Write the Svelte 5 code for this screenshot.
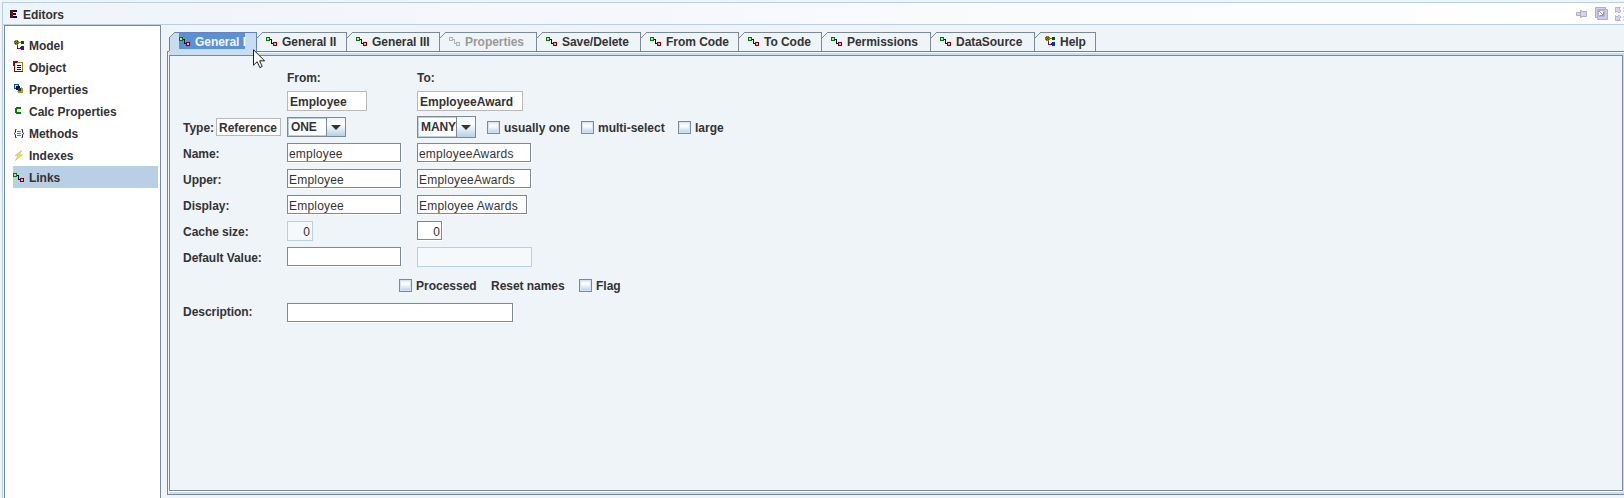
<script>
  const nav = [
    { label: 'Model', icon: 'model' },
    { label: 'Object', icon: 'object' },
    { label: 'Properties', icon: 'props' },
    { label: 'Calc Properties', icon: 'calc' },
    { label: 'Methods', icon: 'methods' },
    { label: 'Indexes', icon: 'indexes' },
    { label: 'Links', icon: 'link' }
  ];
  const tabs = [
    { label: 'General I', width: 88 },
    { label: 'General II', width: 90 },
    { label: 'General III', width: 93 },
    { label: 'Properties', width: 97, disabled: true },
    { label: 'Save/Delete', width: 104 },
    { label: 'From Code', width: 98 },
    { label: 'To Code', width: 83 },
    { label: 'Permissions', width: 109 },
    { label: 'DataSource', width: 104 },
    { label: 'Help', width: 61, icon: 'model' }
  ];
</script>

{#snippet glyph(name, off)}
  <svg class="glyph" width="12" height="12" viewBox="0 0 12 12" shape-rendering="crispEdges">
    {#if name === 'link'}
      <g transform="translate(0 2)" fill="none">
        <rect x="0.5" y="0.5" width="3" height="3" stroke={off ? '#b3b3b3' : '#007800'} fill={off ? '#eee' : '#b8e0b0'} />
        <path d="M4 2.5H5.5V6.5H7" stroke={off ? '#b3b3b3' : '#000070'} />
        <rect x="7.5" y="5.5" width="3" height="3" stroke={off ? '#b3b3b3' : '#800000'} fill={off ? '#eee' : '#e8c0b0'} />
      </g>
    {:else if name === 'model'}
      <g transform="translate(1 1)">
        <path d="M1 0h3v1h1v3h-1v1h-3v-1h-1v-3h1z" fill="#8c8420" />
        <path d="M1 1h1v1h-1zM3 1h1v1h-1zM2 2h1v1h-1zM1 3h1v1h-1zM3 3h1v1h-1z" fill="#4c4a10" />
        <path d="M5 2h2v1h-2z" fill="#808000" />
        <path d="M7 1h3v3h-3z" fill="#00502c" />
        <path d="M3 5h1v3h3v1h-4z" fill="#880088" />
        <path d="M7 6h3v4h-3zM6 7h1v1h-1z" fill="#003a80" />
      </g>
    {:else if name === 'object'}
      <path d="M0 0h5v1h-4v4h-1z" fill="#006000" />
      <path d="M1 1h3v1h-2v8h8v1h-9z" fill="#8b0000" />
      <path d="M4 1h6v9h-1v-8h-5z" fill="#8c8420" />
      <path d="M3 2h6v8h-6z" fill="#fff" />
      <path d="M4 4h4v1h-4zM4 6h4v1h-4zM4 8h4v1h-4z" fill="#000080" />
    {:else if name === 'props'}
      <path d="M1 1h5v5h-5z" fill="#006060" />
      <path d="M2 2h3v3h-3z" fill="#b8dcf0" />
      <path d="M3 3h4v4h-4z" fill="#000080" />
      <path d="M5 5h5v5h-5z" fill="#a09c30" />
      <path d="M5 5h3v3h-3z" fill="#20401c" />
      <path d="M8 4h1v1h-1zM4 8h1v1h-1z" fill="#b0b070" />
    {:else if name === 'calc'}
      <path d="M3 2h5v2h-4v3h4v2h-5v-1h-1v-5h1z" fill="#008000" />
    {:else if name === 'methods'}
      <path d="M3.5 2.500h-1v2.500l-1 1.500 1 1.500v2.500h1M8.500 2.500h1v2.500l1 1.500-1 1.500v2.500h-1" fill="none" stroke="#20208c" shape-rendering="auto" />
      <path d="M4 4h4v1h-4zM4 6h4v1h-4zM4 8h4v1h-4z" fill="#7a8040" />
    {:else if name === 'indexes'}
      <path d="M8.700 1.500L2 6.500h3L2.300 11.500 9.500 5.700H6.200z" fill="#f5ee28" stroke="#b8b480" stroke-width=".6" shape-rendering="auto" />
    {/if}
  </svg>
{/snippet}

{#snippet check(label, w)}
  <span class="check" style="width:{w}px"><i></i><span>{label}</span></span>
{/snippet}

<div class="window">
  <header>
    <svg class="logo" width="8" height="8" viewBox="0 0 8 8" shape-rendering="crispEdges">
      <path d="M0 0h4v8h-4z" fill="#8b0000" /><path d="M0 0h1v8h-1z" fill="#202020" />
      <path d="M3 0h4v2h-4zM3 6h4v2h-4zM3 3h3v2h-3z" fill="#000080" />
      <path d="M3 2h1v1h-1zM3 5h1v1h-1z" fill="#e8d8e0" />
    </svg>
    <span class="title">Editors</span>
    <div class="tools">
      <svg width="12" height="10" viewBox="0 0 12 10"><path d="M.5 3.500h4v3h-4zM4.500 1.500h1v1h5v5h-5v1h-1z" fill="#d6d2f6" stroke="#b0afbc" /></svg>
      <svg width="13" height="13" viewBox="0 0 13 13"><path d="M.5.5h10v10H.5z" fill="#d6d2f6" stroke="#b0afbc" /><path d="M2.500 2.500h10v10h-10z" fill="#cdc9f2" stroke="#b0afbc" /><path d="M3.500 3.500h6v6h-6z" fill="#f7f6ff" stroke="#b6b4c8" /><path d="M4 4l4 4M8.500 4.500v4h-4" fill="none" stroke="#96959f" /></svg>
      <svg width="9" height="14" viewBox="0 0 9 14"><path d="M.5 5.500v-5h5l-1.500 1.500 2 2-2 2-2-2zM.5 8.500v5h5l-1.500-1.500 2-2-2-2-2 2z" fill="#d6d2f6" stroke="#b0afbc" stroke-width=".9" /><path d="M8 1h1M8 4h1M8 10h1M8 13h1" stroke="#b0afbc" /></svg>
    </div>
  </header>

  <div class="body">
    <nav>
      {#each nav as n}
        <div class="item" class:active={n.icon === 'link'}>{@render glyph(n.icon)}<span>{n.label}</span></div>
      {/each}
    </nav>

    <main>
      <div class="tabs">
        {#each tabs as t, i}
          <div class="tab" class:selected={i === 0} class:disabled={t.disabled} style="width:{t.width}px">
            <svg class="corner" width="7" height="7" viewBox="0 0 7 7"><path d="M0 0H6L0 6z" fill="#eff4f9" /><path d="M0 6L6 0" stroke="#7a8a99" /></svg>
            <div class="tab-label">{@render glyph(t.icon ?? 'link', t.disabled)}<span>{t.label}</span></div>
          </div>
        {/each}
        <svg class="cursor" width="13" height="20" viewBox="0 0 13 20"><path d="M.5.800V16.200L4.200 12.700 6.800 18.600 9.200 17.500 6.600 11.800H11.600z" fill="#fff" stroke="#222" /></svg>
      </div>

      <div class="panel">
        <div class="pane">
          <div class="form">
            <span></span><b class="head">From:</b><b class="head">To:</b>
            <span></span><div class="box" style="width:80px">Employee</div><div class="box" style="width:106px">EmployeeAward</div>
            <div class="type"><span>Type:</span><div class="ref">Reference</div></div>
            <div class="combo"><span>ONE</span><i></i></div>
            <div class="many">
              <div class="combo tall"><span>MANY</span><i></i></div>
              {@render check('usually one', 94)}
              {@render check('multi-select', 97)}
              {@render check('large', 60)}
            </div>
            <b>Name:</b><div class="field">employee</div><div class="field">employeeAwards</div>
            <b>Upper:</b><div class="field">Employee</div><div class="field">EmployeeAwards</div>
            <b>Display:</b><div class="field">Employee</div><div class="field" style="width:110px">Employee Awards</div>
            <b>Cache size:</b><div class="field num off" style="width:26px">0</div><div class="field num" style="width:25px">0</div>
            <b>Default Value:</b><div class="field"></div><div class="field off" style="width:115px"></div>
          </div>
          <div class="flags">
            {@render check('Processed', 92)}
            <b>Reset names</b>
            {@render check('Flag', 50)}
          </div>
          <div class="desc"><b>Description:</b><div class="field" style="width:226px"></div></div>
        </div>
      </div>
    </main>
  </div>
</div>

<style>
  :global(body) { background: #eff4f9; overflow: hidden; }
  .window, .window * { box-sizing: border-box; }
  .window {
    height: 498px;
    padding: 2px 0 0 2px;
    display: flex;
    flex-direction: column;
    font: bold 12px/14px "Liberation Sans", Arial, sans-serif;
    color: #333;
    white-space: nowrap;
    overflow: hidden;
  }
  header {
    height: 23px;
    flex: none;
    display: flex;
    align-items: center;
    padding-left: 7px;
    border: 1px solid #b8cfe5;
    border-right: 0;
    background: linear-gradient(90deg, #eff4f9, #fff);
  }
  .logo { margin-top: 1px; }
  .title { margin-left: 5px; padding-top: 2px; letter-spacing: -.05px; }
  .tools { margin-left: auto; display: flex; align-items: center; gap: 7px; }
  .body { flex: 1; display: flex; border-left: 1px solid #b8cfe5; padding-left: 1px; min-height: 0; }
  nav {
    width: 157px;
    flex: none;
    background: #fff;
    border: 1px solid #7a8a99;
    border-bottom: 0;
    padding: 8px 2px 0 8px;
  }
  .item { height: 22px; display: flex; align-items: center; gap: 4px; letter-spacing: -.03px; }
  .item span, .tab-label span { padding-top: 2px; }
  .item.active { background: #b8cfe5; }
  .glyph { flex: none; display: block; }
  main { flex: 1; min-width: 0; display: flex; flex-direction: column; padding: 7px 0 3px 6px; }
  .tabs { display: flex; height: 19px; padding-left: 2px; position: relative; z-index: 1; }
  .tab {
    flex: none;
    display: flex;
    border-right: 1px solid #7a8a99;
    background: linear-gradient(#7a8a99, #7a8a99) 6px 0 / 100% 1px no-repeat;
  }
  .corner { flex: none; margin-right: -7px; }
  .tab-label { display: flex; align-items: center; gap: 4px; height: 16px; margin: 1px 0 0 9px; letter-spacing: -.04px; }
  .selected {
    height: 22px;
    background: linear-gradient(#6382bf, #6382bf) 6px 0 / 100% 1px no-repeat, linear-gradient(#6382bf, #6382bf) 0 6px / 1px 13px no-repeat, #c8ddf2;
    border-color: #6382bf;
  }
  .selected .tab-label { margin-left: 10px; width: 66px; background: #5b90d3; color: #f2f7fc; }
  .disabled { color: #999; }
  .cursor { position: absolute; left: 86px; top: 17px; }
  .panel {
    flex: 1;
    border: 1px solid #6382bf;
    border-right: 0;
    border-bottom-color: #7a8a99;
    background: #c8ddf2;
    padding: 3px 1px 3px 1px;
    box-shadow: inset 1px 1px #f4f8fc;
  }
  .pane {
    height: 100%;
    border: 1px solid #7a8a99;
    background: #eff4f8;
    padding: 6px 0 0 13px;
    box-shadow: 0 1px #fff;
  }
  .form {
    display: grid;
    grid-template-columns: 104px 130px auto;
    grid-auto-rows: 26px;
    align-items: center;
    justify-content: start;
  }
  .head { padding-top: 6px; }
  b { padding-top: 1px; letter-spacing: -.04px; }
  .box, .ref { border: 1px solid #b8b8b8; background: #fff; padding-left: 2px; }
  .box { height: 20px; line-height: 20px; }
  .type, .many, .flags, .desc { display: flex; align-items: center; }
  .type { width: 98px; justify-content: space-between; }
  .type > span { padding-top: 1px; width: 33px; }
  .ref { flex: none; width: 65px; height: 18px; line-height: 18px; }
  .combo {
    width: 59px;
    height: 20px;
    display: flex;
    border: 1px solid #7a8a99;
    background: #b8cfe5;
    padding: 1px 0 1px 1px;
    line-height: 16px;
  }
  .combo.tall { height: 22px; margin-right: 11px; line-height: 18px; }
  .combo span { width: 37px; background: #fff; padding-left: 2px; letter-spacing: -.1px; }
  .combo i {
    flex: 1;
    margin: -1px 0 -1px 0;
    border-left: 1px solid #7a8a99;
    background: linear-gradient(#eef4fb, #fff 35%, #b8cfe5);
    display: flex;
    align-items: center;
    justify-content: center;
  }
  .combo i::before { content: ""; border: 5px solid transparent; border-top-color: #333; border-bottom: 0; }
  .check { display: flex; align-items: center; gap: 4px; }
  .check span { padding-top: 1px; }
  .check i {
    width: 13px;
    height: 13px;
    flex: none;
    border: 1px solid #7a8a99;
    background: linear-gradient(#dde8f3, #fff 35%, #b8cfe5);
    box-shadow: inset 0 0 0 1px #d5e2ef;
  }
  .field {
    width: 114px;
    height: 19px;
    margin-bottom: 1px;
    border: 1px solid #7a8a99;
    background: #fff;
    box-shadow: 1px 1px #fff;
    padding-left: 1px;
    font-weight: normal;
    line-height: 20px;
    letter-spacing: .2px;
  }
  .num { text-align: right; padding-right: 1px; }
  .off { height: 20px; margin-bottom: 0; border-color: #b8cfe5; background: #f6f9fc; box-shadow: none; }
  .num.off { padding-right: 2px; }
  .flags { height: 29px; margin: 1px 0 0 216px; }
  .flags b { width: 88px; }
  .desc { height: 26px; }
  .desc b { width: 104px; margin-bottom: 4px; }
</style>
